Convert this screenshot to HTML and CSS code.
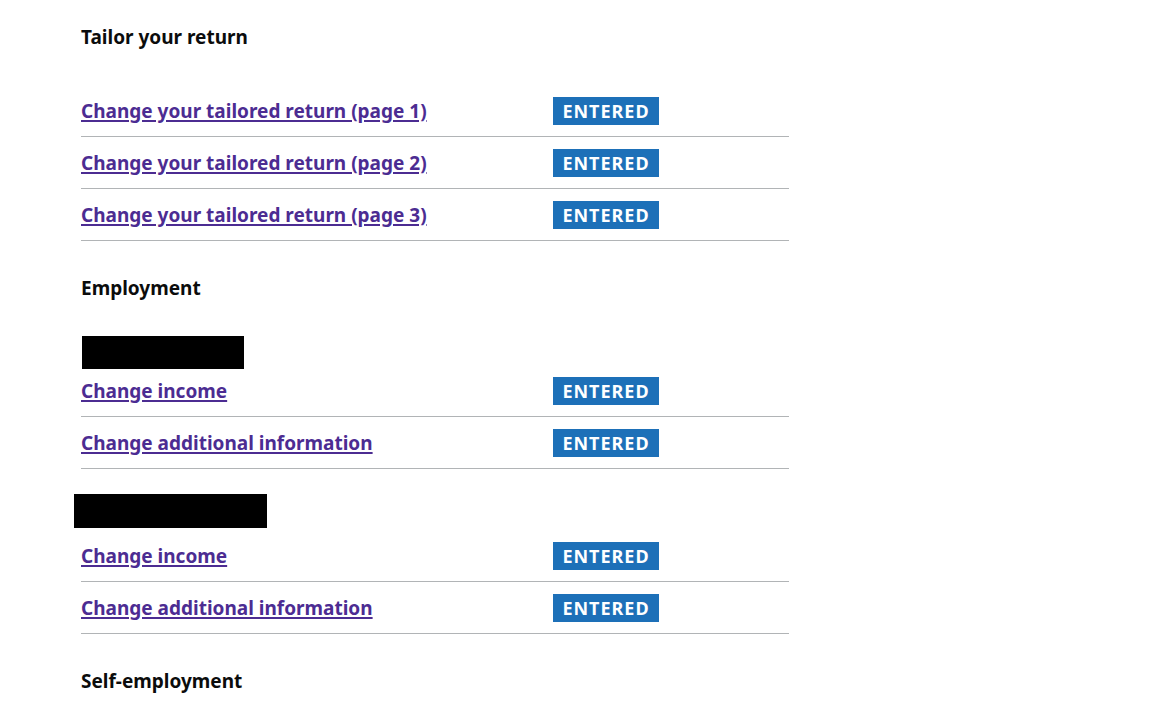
FILE: index.html
```html
<!DOCTYPE html>
<html lang="en">
<head>
    <meta charset="UTF-8">
    <meta name="viewport" content="width=device-width, initial-scale=1.0">
    <title>Your tax return</title>
    <link rel="stylesheet" href="styles.css">
</head>
<body>

    <div class="container">

        <h2 class="section-heading">Tailor your return</h2>
        <ul class="task-list">
            <li class="task-item">
                <a class="task-link" href="#">Change your tailored return (page 1)</a>
                <strong class="tag">Entered</strong>
            </li>
            <li class="task-item">
                <a class="task-link" href="#">Change your tailored return (page 2)</a>
                <strong class="tag">Entered</strong>
            </li>
            <li class="task-item">
                <a class="task-link" href="#">Change your tailored return (page 3)</a>
                <strong class="tag">Entered</strong>
            </li>
        </ul>

        <h2 class="section-heading">Employment</h2>

        <!-- employer names are redacted -->
        <h3 class="sub-heading redacted redacted-first">Employer</h3>
        <ul class="task-list">
            <li class="task-item">
                <a class="task-link" href="#">Change income</a>
                <strong class="tag">Entered</strong>
            </li>
            <li class="task-item">
                <a class="task-link" href="#">Change additional information</a>
                <strong class="tag">Entered</strong>
            </li>
        </ul>

        <h3 class="sub-heading redacted redacted-second">Employer</h3>
        <ul class="task-list">
            <li class="task-item">
                <a class="task-link" href="#">Change income</a>
                <strong class="tag">Entered</strong>
            </li>
            <li class="task-item">
                <a class="task-link" href="#">Change additional information</a>
                <strong class="tag">Entered</strong>
            </li>
        </ul>

        <h2 class="section-heading">Self-employment</h2>

    </div>

</body>
</html>
```
FILE: styles.css
```css
body {
    font-family: "Noto Sans", Arial, sans-serif;
    color: #0b0c0c;
    background-color: #fff;
    margin: 0;
}
.container {
    padding: 25px 0 0 81px;
    width: 708px;
}
.section-heading {
    font-size: 19px;
    line-height: 25px;
    font-weight: 700;
    margin: 0 0 35px;
}
.task-list {
    list-style: none;
    margin: 0 0 35px;
    padding: 0;
}
.task-item {
    display: flex;
    align-items: center;
    padding: 12px 0 11px;
    border-bottom: 1px solid #b1b4b6;
}
.task-link {
    width: 472px;
    font-size: 19px;
    line-height: 25px;
    font-weight: 700;
    color: #4c2c92;
    text-decoration: underline;
    text-decoration-thickness: 2px;
    text-underline-offset: 2px;
}
.tag {
    display: inline-block;
    box-sizing: border-box;
    height: 28px;
    width: 106px;
    padding: 3px 0 0;
    text-align: center;
    background-color: #1d70b8;
    color: #fff;
    font-size: 18px;
    line-height: 22px;
    font-weight: 700;
    letter-spacing: 1px;
    text-transform: uppercase;
}
.sub-heading {
    font-size: 19px;
    line-height: 25px;
    font-weight: 700;
    margin: 0;
}
.redacted {
    background-color: #000;
    color: transparent;
    overflow: hidden;
}
.redacted-first {
    width: 162px;
    height: 33px;
    margin: 35px 0 -4px 1px;
}
.redacted-second {
    width: 193px;
    height: 34px;
    margin: -10px 0 2px -7px;
}
```
